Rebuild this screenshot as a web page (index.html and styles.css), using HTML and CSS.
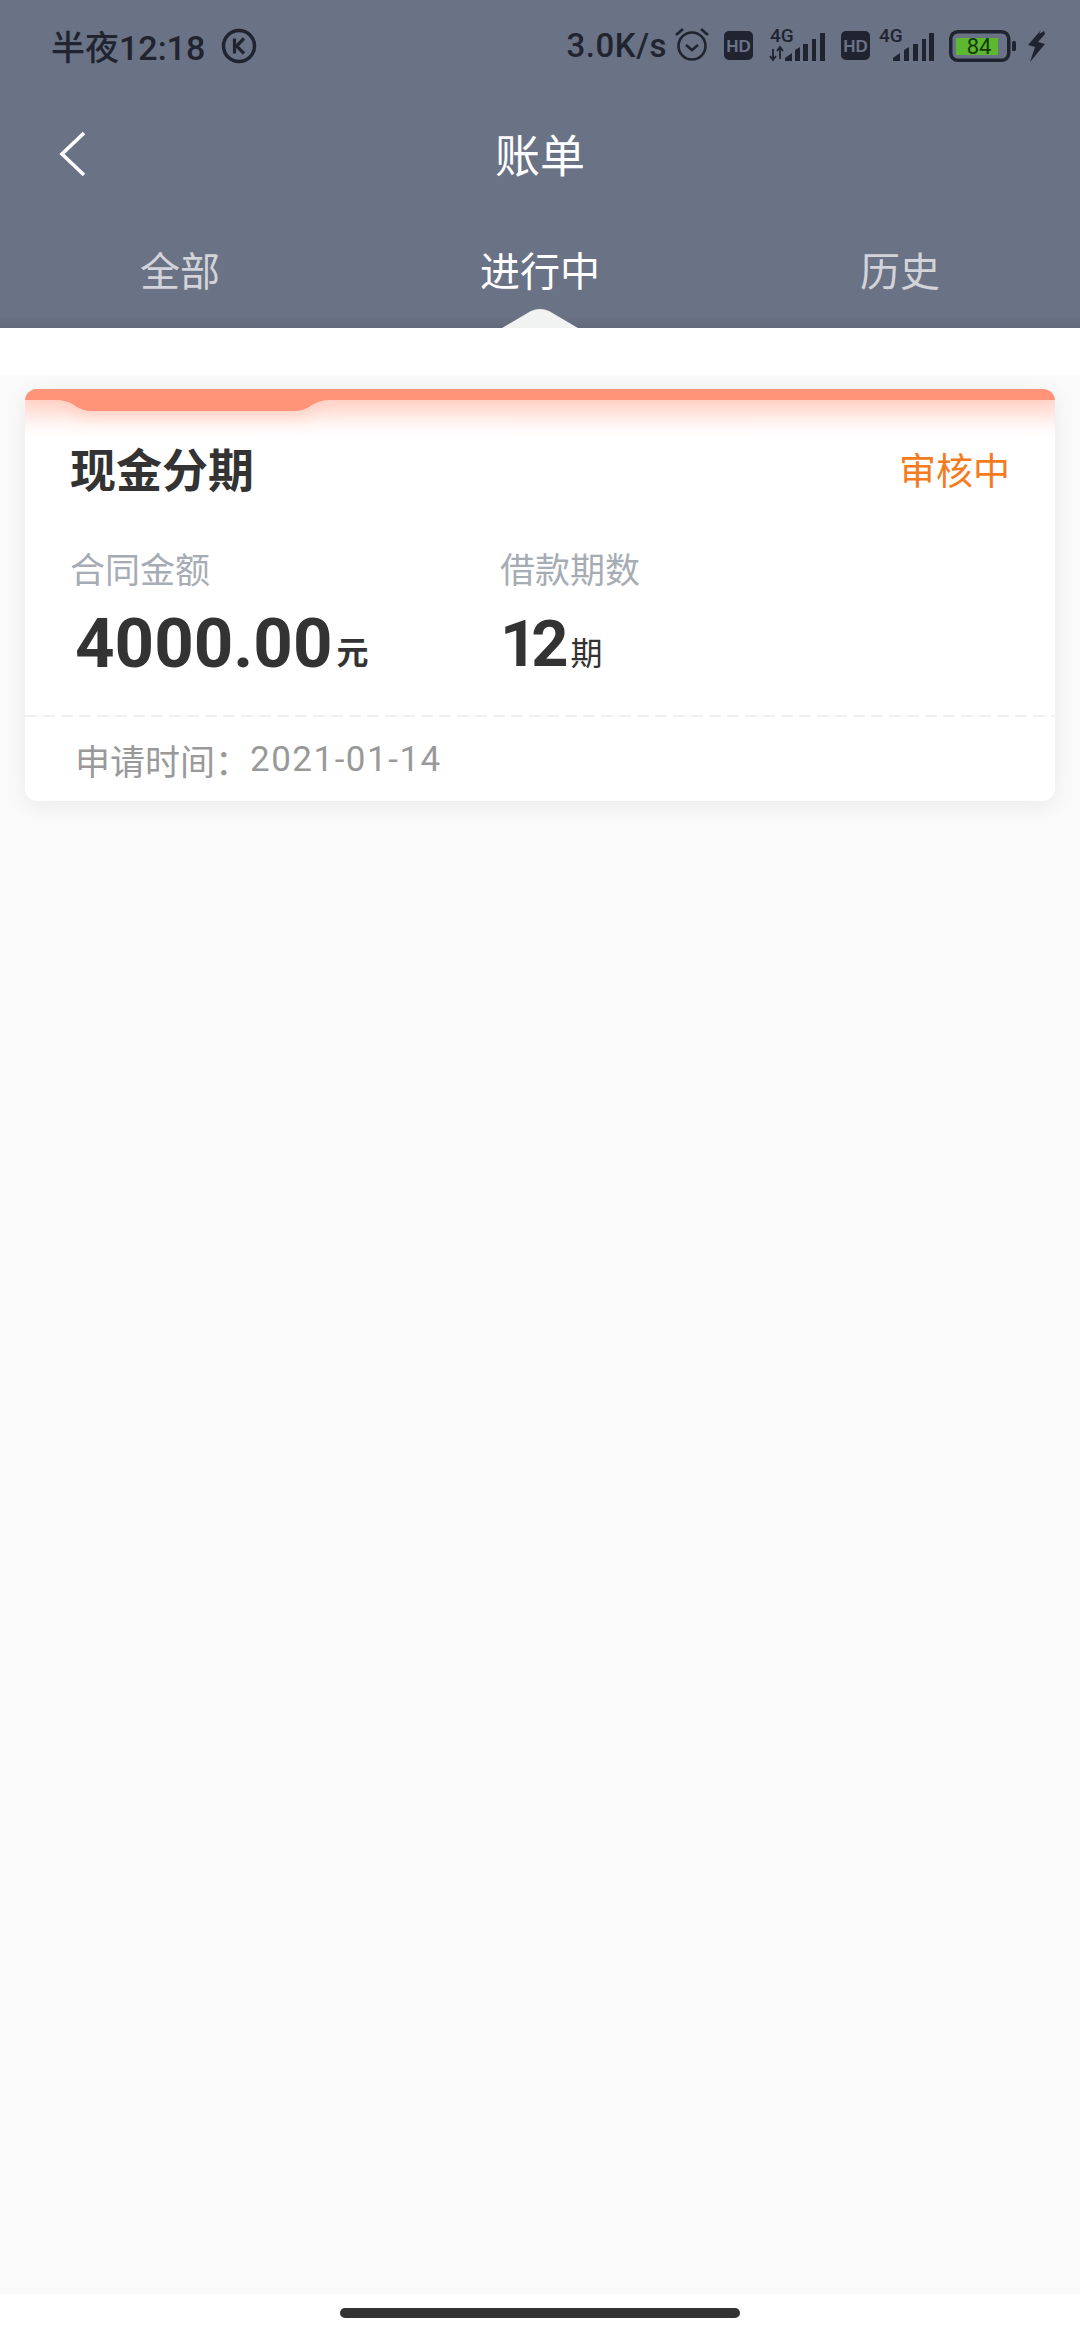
FILE: index.html
```html
<!DOCTYPE html>
<html lang="zh-CN">
<head>
    <meta charset="UTF-8">
    <meta name="viewport" content="width=device-width, initial-scale=1.0">
    <title>账单</title>
    <link rel="stylesheet" href="styles.css">
</head>
<body>
    <div class="page">
        <header class="header">
            <!-- 状态栏 -->
            <div class="status-bar">
                <div class="status-left">
                    <span class="time">半夜12:18</span>
                    <svg class="k-icon" width="36" height="36" viewBox="0 0 36 36">
                        <circle cx="18" cy="18" r="15.5" fill="none" stroke="#1f2430" stroke-width="3.5"/>
                        <path d="M13.5 10.5v15M23 10.5l-7.5 7.5 7.5 7.5" fill="none" stroke="#1f2430" stroke-width="3.2"/>
                    </svg>
                </div>
                <div class="status-right">
                    <span class="speed">3.0K/s</span>
                    <svg class="alarm" width="36" height="36" viewBox="0 0 36 36">
                        <circle cx="18" cy="20" r="13.5" fill="none" stroke="#1f2430" stroke-width="2.6"/>
                        <path d="M12 19l6 5 6-5" fill="none" stroke="#1f2430" stroke-width="2.6"/>
                        <path d="M2 9l7-6M34 9l-7-6" fill="none" stroke="#1f2430" stroke-width="2.6"/>
                    </svg>
                    <svg class="hd hd1" width="29" height="29" viewBox="0 0 29 29">
                        <rect width="29" height="29" rx="5" fill="#1f2430"/>
                        <text x="14.5" y="20.5" text-anchor="middle" class="hd-text">HD</text>
                    </svg>
                    <svg class="signal signal1" width="57" height="45" viewBox="0 -12 57 45">
                        <text x="2" y="13" class="net-text">4G</text>
                        <path d="M5 31V20M2 27l3 4 3-4M12 19v11M9 22l3-4 3 4" fill="none" stroke="#1f2430" stroke-width="1.8"/>
                        <path d="M17 32v-3l7-5v8zM27 32V21l5-3v14zM35 32V15h5v17zM44 32V10h4v22zM52 32V4h5v28z" fill="#1f2430"/>
                    </svg>
                    <svg class="hd hd2" width="29" height="29" viewBox="0 0 29 29">
                        <rect width="29" height="29" rx="5" fill="#1f2430"/>
                        <text x="14.5" y="20.5" text-anchor="middle" class="hd-text">HD</text>
                    </svg>
                    <svg class="signal signal2" width="55" height="45" viewBox="0 -12 55 45">
                        <text x="0" y="13" class="net-text">4G</text>
                        <path d="M14 32v-3l7-5v8zM25 32V21l5-3v14zM34 32V15h5v17zM43 32V10h4v22zM50 32V4h5v28z" fill="#1f2430"/>
                    </svg>
                    <svg class="battery" width="68" height="32" viewBox="0 0 68 32">
                        <rect x="1.75" y="1.75" width="58" height="28.5" rx="7" fill="none" stroke="#1f2430" stroke-width="3.5"/>
                        <rect x="7" y="8" width="42" height="17" fill="#5cb82e"/>
                        <text x="30" y="24" text-anchor="middle" class="battery-text">84</text>
                        <rect x="63" y="11" width="4" height="10" rx="1.5" fill="#1f2430"/>
                    </svg>
                    <svg class="bolt" width="19" height="32" viewBox="0 0 19 32">
                        <path d="M14 0L1 15l7 2-5 15 15-18-7-2 7-8-1-3-5 3z" fill="#1f2430"/>
                    </svg>
                </div>
            </div>

            <!-- 标题栏 -->
            <div class="nav-bar">
                <svg class="back" width="30" height="48" viewBox="0 0 30 48">
                    <path d="M26 3L4 24l22 21" fill="none" stroke="#fff" stroke-width="3.6"/>
                </svg>
                <div class="nav-title">账单</div>
            </div>

            <!-- tab切换 -->
            <div class="tabs">
                <div class="tab">全部</div>
                <div class="tab active">
                    进行中
                    <svg class="tab-arrow" width="76" height="19" viewBox="0 0 76 19">
                        <path d="M0 19L29 2q9-4 18 0l29 17z" fill="#f1f2f2"/>
                    </svg>
                </div>
                <div class="tab">历史</div>
            </div>
        </header>

        <div class="tab-gap"></div>

        <main class="list">
            <div class="card">
                <div class="card-top">
                    <svg class="card-strip" width="1030" height="22" viewBox="0 0 1030 22">
                        <path d="M0 11V0h1030v11H305q-10 0-18 5-8 6-18 6H67q-10 0-18-6-8-5-18-5z" fill="#ff9479"/>
                    </svg>
                </div>
                <div class="card-body">
                    <div class="card-head">
                        <div class="card-title">现金分期</div>
                        <div class="card-status">审核中</div>
                    </div>
                    <div class="card-info">
                        <div class="info-item amount">
                            <div class="info-label">合同金额</div>
                            <div class="info-value"><span class="num">4000.00</span><span class="unit">元</span></div>
                        </div>
                        <div class="info-item">
                            <div class="info-label">借款期数</div>
                            <div class="info-value"><span class="num num-short">12</span><span class="unit light">期</span></div>
                        </div>
                    </div>
                </div>
                <div class="dash"></div>
                <div class="card-foot"><span>申请时间：</span><span class="date">2021-01-14</span></div>
            </div>
        </main>

        <footer class="home-area">
            <div class="home-bar"></div>
        </footer>
    </div>
</body>
</html>
```

FILE: styles.css
```css
*{
    padding: 0;
    margin: 0;
    box-sizing: border-box;
}
body{
    font-family: Roboto, "Noto Sans CJK SC", sans-serif;
    background-color: #fff;
}
.page{
    width: 1080px;
    height: 2340px;
    display: flex;
    flex-direction: column;
}
/* 顶部深色区域 */
.header{
    height: 328px;
    background: linear-gradient(to bottom, #6a7285 0, #6a7285 316px, #62697a 328px);
    flex-shrink: 0;
}
.status-bar{
    height: 91px;
    padding: 0 34px 0 51px;
    display: flex;
    align-items: center;
    justify-content: space-between;
    color: #1f2430;
}
.status-left, .status-right{
    display: flex;
    align-items: center;
}
.time{
    font-size: 34px;
    font-weight: 500;
}
.k-icon{
    margin-left: 16px;
}
.speed{
    font-size: 33px;
    font-weight: 500;
    letter-spacing: 0.5px;
}
.alarm{
    margin-left: 7px;
    margin-top: -4px;
}
.hd{
    flex-shrink: 0;
}
.hd1{
    margin-left: 14px;
}
.signal{
    margin-top: -12px;
}
.signal1{
    margin-left: 15px;
}
.hd2{
    margin-left: 16px;
}
.signal2{
    margin-left: 9px;
}
.battery{
    margin-left: 15px;
}
.bolt{
    margin-left: 10px;
}
.hd-text{
    font-family: "Liberation Sans", sans-serif;
    font-size: 17px;
    font-weight: 700;
    fill: #6a7285;
}
.net-text{
    font-family: Roboto, sans-serif;
    font-size: 19px;
    font-weight: 500;
    fill: #1f2430;
}
.battery-text{
    font-family: Roboto, sans-serif;
    font-size: 22px;
    fill: #143a08;
}
/* 标题栏 */
.nav-bar{
    height: 125px;
    padding-left: 58px;
    position: relative;
    display: flex;
    align-items: center;
}
.back{
    position: absolute;
    left: 58px;
    top: 39px;
}
.nav-title{
    flex: 1;
    margin-left: -58px;
    text-align: center;
    font-size: 45px;
    color: #fff;
}
/* tab */
.tabs{
    height: 112px;
    display: grid;
    grid-template-columns: repeat(3, 1fr);
}
.tab{
    position: relative;
    display: flex;
    align-items: center;
    justify-content: center;
    padding-bottom: 6px;
    font-size: 40px;
    color: #d2d4d9;
}
.tab.active{
    color: #fff;
}
.tab-arrow{
    position: absolute;
    left: 50%;
    bottom: 0;
    transform: translateX(-50%);
}
.tab-gap{
    height: 47px;
    background-color: #fff;
    flex-shrink: 0;
}
/* 列表 */
.list{
    flex: 1;
    background-color: #fafafa;
    padding: 14px 25px 0;
}
.card{
    display: flex;
    flex-direction: column;
    height: 412px;
    background-color: #fff;
    border-radius: 12px;
    box-shadow: 0 4px 22px rgba(0, 0, 0, 0.07);
    overflow: hidden;
}
.card-top{
    height: 34px;
    background: linear-gradient(to bottom, #ffdcd2 0, #ffdcd2 10px, #fff 46px);
    flex-shrink: 0;
}
.card-strip{
    display: block;
    filter: drop-shadow(0 6px 8px rgba(255, 148, 121, 0.28));
}
.card-body{
    height: 292px;
    padding: 6px 45px 0 45px;
    background: linear-gradient(to bottom, #fff5f2 0, #fff 14px);
}
.card-head{
    display: flex;
    align-items: center;
    justify-content: space-between;
    height: 76px;
}
.card-title{
    font-size: 46px;
    font-weight: 700;
    color: #333;
}
.card-status{
    font-size: 37px;
    padding-top: 4px;
    color: #f47b20;
}
.card-info{
    display: flex;
    margin-top: 45px;
}
.info-item{
    width: 430px;
}
.info-label{
    font-size: 35px;
    line-height: 44px;
    color: #a6acb4;
}
.info-value{
    color: #333;
    margin-top: 8px;
    line-height: 84px;
    white-space: nowrap;
}
.amount .info-value{
    padding-left: 5px;
}
.num{
    font-size: 69px;
    font-weight: 700;
}
.num-short{
    font-size: 65px;
    letter-spacing: -6px;
    vertical-align: 2px;
}
.unit{
    font-size: 32px;
    font-weight: 700;
    margin-left: 4px;
    vertical-align: 3px;
}
.unit.light{
    font-weight: 400;
    margin-left: 8px;
}
.dash{
    height: 2px;
    flex-shrink: 0;
    background: repeating-linear-gradient(to right, #f0f0f0 0, #f0f0f0 12px, #fff 12px, #fff 18px);
}
.card-foot{
    flex: 1;
    display: flex;
    align-items: center;
    padding-left: 50px;
    font-size: 35px;
    color: #999;
}
.date{
    letter-spacing: 1.5px;
}
/* 底部横条 */
.home-area{
    height: 46px;
    background-color: #fff;
    flex-shrink: 0;
    padding-top: 14px;
}
.home-bar{
    width: 400px;
    height: 10px;
    margin: 0 auto;
    background-color: #333;
    border-radius: 5px;
}
```
